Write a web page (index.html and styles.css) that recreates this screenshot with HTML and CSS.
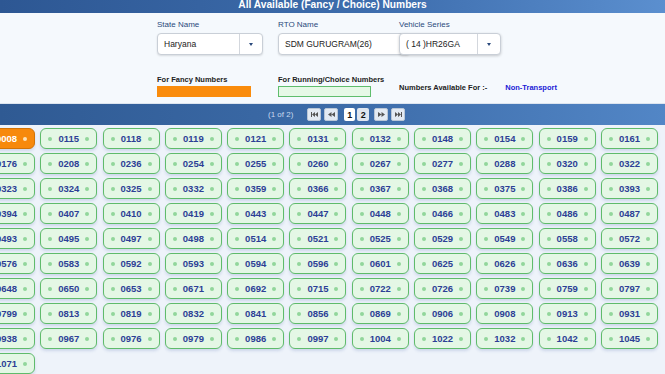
FILE: index.html
```html
<!DOCTYPE html>
<html lang="en">
<head>
    <meta charset="UTF-8">
    <meta name="viewport" content="width=device-width, initial-scale=1.0">
    <title>Fancy Numbers</title>
    <link rel="stylesheet" href="styles.css">
</head>
<body>
    <div class="header">All Available (Fancy / Choice) Numbers</div>

    <div class="filters">
        <div class="field">
            <label>State Name</label>
            <div class="select state-select">
                <span>Haryana</span>
                <span class="caret"></span>
            </div>
        </div>
        <div class="field">
            <label>RTO Name</label>
            <div class="select rto-select">
                <span>SDM GURUGRAM(26)</span>
            </div>
        </div>
        <div class="field">
            <label>Vehicle Series</label>
            <div class="select series-select">
                <span>( 14 )HR26GA</span>
                <span class="caret"></span>
            </div>
        </div>
    </div>

    <div class="legend">
        <div class="legend-item">
            <label>For Fancy Numbers</label>
            <div class="swatch fancy"></div>
        </div>
        <div class="legend-item">
            <label>For Running/Choice Numbers</label>
            <div class="swatch running"></div>
        </div>
        <div class="available">
            <span>Numbers Available For :-</span>
            <span class="transport">Non-Transport</span>
        </div>
    </div>

    <div class="pager">
        <span class="page-info">(1 of 2)</span>
        <span class="pg-btn">
            <svg width="7" height="5" viewBox="0 0 7 5"><rect x="0" y="0" width="1" height="5" fill="#555"/><path d="M1 2.5 L4 0 V5 Z M4 2.5 L7 0 V5 Z" fill="#555"/></svg>
        </span>
        <span class="pg-btn">
            <svg width="7" height="5" viewBox="0 0 7 5"><path d="M0 2.5 L3.5 0 V5 Z M3.5 2.5 L7 0 V5 Z" fill="#555"/></svg>
        </span>
        <span class="pg-num active">1</span>
        <span class="pg-num">2</span>
        <span class="pg-btn gap-left">
            <svg width="7" height="5" viewBox="0 0 7 5"><path d="M0 0 L3.5 2.5 L0 5 Z M3.5 0 L7 2.5 L3.5 5 Z" fill="#555"/></svg>
        </span>
        <span class="pg-btn">
            <svg width="7" height="5" viewBox="0 0 7 5"><path d="M0 0 L3 2.5 L0 5 Z M3 0 L6 2.5 L3 5 Z" fill="#555"/><rect x="6" y="0" width="1" height="5" fill="#555"/></svg>
        </span>
    </div>

    <div class="numbers">
        <div class="grid" id="grid"></div>
    </div>

    <script>
        const fancy = ['0008'];
        const numbers = [
            '0008', '0115', '0118', '0119', '0121', '0131', '0132', '0148', '0154', '0159', '0161',
            '0176', '0208', '0236', '0254', '0255', '0260', '0267', '0277', '0288', '0320', '0322',
            '0323', '0324', '0325', '0332', '0359', '0366', '0367', '0368', '0375', '0386', '0393',
            '0394', '0407', '0410', '0419', '0443', '0447', '0448', '0466', '0483', '0486', '0487',
            '0493', '0495', '0497', '0498', '0514', '0521', '0525', '0529', '0549', '0558', '0572',
            '0576', '0583', '0592', '0593', '0594', '0596', '0601', '0625', '0626', '0636', '0639',
            '0648', '0650', '0653', '0671', '0692', '0715', '0722', '0726', '0739', '0759', '0797',
            '0799', '0813', '0819', '0832', '0841', '0856', '0869', '0906', '0908', '0913', '0931',
            '0938', '0967', '0976', '0979', '0986', '0997', '1004', '1022', '1032', '1042', '1045',
            '1071'
        ];

        // Build the number cards
        document.getElementById('grid').innerHTML = numbers.map(n => `
            <div class="num-card${fancy.includes(n) ? ' fancy-card' : ''}">
                <span class="dot"></span>${n}<span class="dot"></span>
            </div>
        `).join('');
    </script>
</body>
</html>
```

FILE: styles.css
```css
body {
    font-family: "Liberation Sans", Arial, sans-serif;
    margin: 0;
    padding: 0;
    width: 665px;
    height: 374px;
    overflow: hidden;
    background: #eef3fa;
}
.header {
    height: 13px;
    line-height: 10px;
    text-align: center;
    color: #fff;
    font-weight: bold;
    font-size: 10.2px;
    background: linear-gradient(to right, #2d5793, #3f6faf 60%, #5b8fcf);
}
.filters {
    display: flex;
    padding: 7px 0 0 157px;
    background: #f5f9fd;
}
.field {
    width: 121px;
    display: flex;
    flex-direction: column;
}
.field label {
    font-size: 8px;
    color: #2a4a7c;
    height: 13px;
    line-height: 10px;
}
.select {
    height: 20px;
    background: #fff;
    border: 1px solid #c9cfd7;
    border-radius: 4px;
    box-shadow: 0 1px 2px rgba(0, 0, 0, 0.12);
    display: flex;
    align-items: center;
    font-size: 8.5px;
    color: #222;
    padding-left: 6px;
}
.select span:first-child {
    flex: 1;
}
.state-select {
    width: 98px;
}
.rto-select {
    width: 124px;
}
.series-select {
    width: 94px;
    position: relative;
    z-index: 1;
    box-shadow: 0 1px 3px rgba(0, 0, 0, 0.2);
}
.caret {
    width: 22px;
    height: 100%;
    border-left: 1px solid #d3d7dd;
    display: flex;
    align-items: center;
    justify-content: center;
}
.caret::after {
    content: "";
    border-left: 2.5px solid transparent;
    border-right: 2.5px solid transparent;
    border-top: 3px solid #2a4a7c;
}
.legend {
    display: flex;
    padding: 20px 0 6px 157px;
    background: #f5f9fd;
    border-bottom: 1px solid #dde5ef;
}
.legend-item {
    width: 121px;
}
.legend-item label {
    display: block;
    font-size: 7.5px;
    font-weight: bold;
    color: #222;
    height: 11px;
    line-height: 9px;
}
.swatch {
    width: 94px;
    height: 11px;
}
.swatch.fancy {
    background: #fa8c0c;
}
.swatch.running {
    width: 91px;
    height: 9px;
    background: #e6f8e6;
    border: 1.5px solid #5fbd6c;
}
.available {
    display: flex;
    align-items: center;
    font-size: 7.5px;
    font-weight: bold;
    color: #222;
    padding-top: 3px;
}
.available .transport {
    color: #1b1bd6;
    margin-left: 18px;
}
.pager {
    height: 21px;
    display: flex;
    align-items: center;
    padding-left: 268px;
    background: linear-gradient(to right, #2f5a93, #3c6ba8 50%, #5286c6);
}
.page-info {
    font-size: 8px;
    color: #c9d9ee;
    margin-right: 14px;
}
.pg-btn {
    width: 14px;
    height: 13px;
    margin-right: 3px;
    background: #e3eaf3;
    border: 1px solid #b9c6d6;
    border-radius: 2px;
    box-sizing: border-box;
    display: flex;
    align-items: center;
    justify-content: center;
}
.pg-btn.gap-left {
    margin-left: 5px;
}
.pg-num {
    height: 13px;
    width: 11px;
    margin-left: 2px;
    font-size: 9px;
    font-weight: bold;
    color: #111;
    background: #fff;
    border-radius: 2px;
    display: flex;
    align-items: center;
    justify-content: center;
}
.pg-num.active {
    margin-left: 3px;
}
.pg-num + .pg-num {
    background: #dfe6ef;
    width: 12px;
}
.numbers {
    padding-top: 3px;
}
.grid {
    margin-left: -22px;
    display: grid;
    grid-template-columns: repeat(11, 57px);
    gap: 4px 5.3px;
}
.num-card {
    height: 21px;
    box-sizing: border-box;
    background: #e4f7e5;
    border: 1.5px solid #5fbb6b;
    border-radius: 6px;
    box-shadow: 0 2px 3px rgba(90, 120, 180, 0.22);
    display: flex;
    align-items: center;
    justify-content: space-between;
    padding: 0 7px;
    font-size: 9.5px;
    font-weight: bold;
    color: #2d3f96;
}
.dot {
    width: 4px;
    height: 4px;
    border-radius: 50%;
    background: #92d69b;
}
.fancy-card {
    background: #f7890c;
    border-color: #d27306;
    color: #fff;
}
.fancy-card .dot {
    background: #fde2b8;
}
```
